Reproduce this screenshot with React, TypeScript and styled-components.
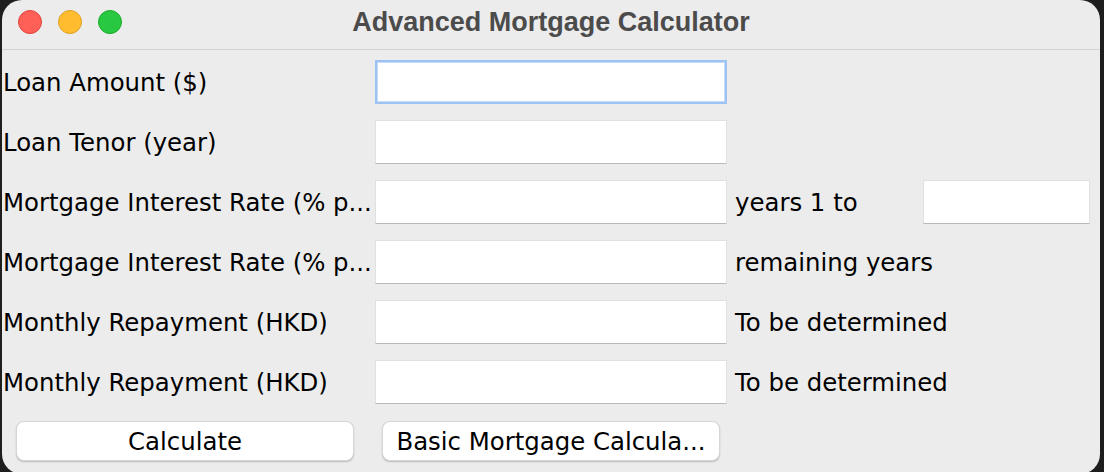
import * as React from 'react';
import styled, { createGlobalStyle } from 'styled-components';

const GlobalStyle = createGlobalStyle`
  html, body {
    margin: 0;
    padding: 0;
    background: #1e1e1e;
    overflow: hidden;
  }
  * {
    box-sizing: border-box;
  }
`;

type Row = {
  label: string;
  focused?: boolean;
  side?: string;
  extraField?: boolean;
};

const rows: Row[] = [
  { label: 'Loan Amount ($)', focused: true },
  { label: 'Loan Tenor (year)' },
  { label: 'Mortgage Interest Rate (% p...', side: 'years 1 to', extraField: true },
  { label: 'Mortgage Interest Rate (% p...', side: 'remaining years' },
  { label: 'Monthly Repayment (HKD)', side: 'To be determined' },
  { label: 'Monthly Repayment (HKD)', side: 'To be determined' },
];

const lights = [
  { fill: '#fe5f57', edge: '#e0443e' },
  { fill: '#febc2e', edge: '#dea123' },
  { fill: '#28c840', edge: '#1aab29' },
];

export default function App() {
  return (
    <>
      <GlobalStyle />
      <Window>
        <TitleBar>
          <Lights>
            {lights.map((l, i) => (
              <Light key={i} $fill={l.fill} $edge={l.edge} />
            ))}
          </Lights>
          <Title>Advanced Mortgage Calculator</Title>
          <span />
        </TitleBar>
        <Form>
          {rows.map((r, i) => (
            <FormRow key={i}>
              <Label>{r.label}</Label>
              <Field $focused={r.focused} />
              {r.side && <SideLabel $wide={!r.extraField}>{r.side}</SideLabel>}
              {r.extraField && <Field />}
            </FormRow>
          ))}
        </Form>
        <Buttons>
          <Button>Calculate</Button>
          <Button>Basic Mortgage Calcula...</Button>
        </Buttons>
      </Window>
    </>
  );
}

const Window = styled.div`
  margin-left: 2px;
  width: 1098px;
  height: 474px;
  background: #ececec;
  border-radius: 20px;
  overflow: hidden;
  display: flex;
  flex-direction: column;
  font-family: 'DejaVu Sans', 'Liberation Sans', sans-serif;
  color: #000;
`;

const TitleBar = styled.div`
  display: grid;
  grid-template-columns: 1fr auto 1fr;
  align-items: center;
  height: 50px;
  padding: 0 16px 5px;
  border-bottom: 1px solid #d3d3d3;
`;

const Lights = styled.div`
  display: flex;
  gap: 16px;
`;

const Light = styled.span<{ $fill: string; $edge: string }>`
  width: 24px;
  height: 24px;
  border-radius: 50%;
  background: ${(p) => p.$fill};
  border: 1px solid ${(p) => p.$edge};
`;

const Title = styled.div`
  font-family: 'Liberation Sans', Arial, sans-serif;
  font-weight: 700;
  font-size: 27px;
  color: #4b4b4b;
  line-height: 1;
`;

const Form = styled.div`
  display: flex;
  flex-direction: column;
  gap: 16px;
  padding: 10px 0 0 1px;
`;

const FormRow = styled.div`
  display: grid;
  grid-template-columns: 372px 352px 196px 167px;
  height: 44px;
  align-items: stretch;
`;

const Label = styled.div`
  display: flex;
  align-items: center;
  font-size: 24.4px;
  white-space: nowrap;
  overflow: hidden;
`;

const SideLabel = styled(Label)<{ $wide?: boolean }>`
  padding-left: 8px;
  grid-column: ${(p) => (p.$wide ? 'span 2' : 'auto')};
`;

const Field = styled.input.attrs({ type: 'text' })<{ $focused?: boolean }>`
  height: 44px;
  width: 100%;
  margin: 0;
  padding: 0 8px;
  background: #fff;
  outline: none;
  font: inherit;
  border: 1px solid #e0e0e0;
  border-bottom-color: #b9b9b9;
  ${(p) =>
    p.$focused &&
    `
    border: 2px solid #9cc3f3;
    box-shadow: inset 0 0 0 1px #c4dbf7;
  `}
`;

const Buttons = styled.div`
  display: flex;
  gap: 28px;
  padding: 17px 0 0 14px;
`;

const Button = styled.button`
  width: 338px;
  height: 40px;
  background: #fff;
  border: 1px solid #d6d6d6;
  border-radius: 8px;
  box-shadow: 0 1px 1.5px rgba(0, 0, 0, 0.22);
  font-family: 'DejaVu Sans', sans-serif;
  font-size: 24.4px;
  color: #000;
  padding: 0;
`;
